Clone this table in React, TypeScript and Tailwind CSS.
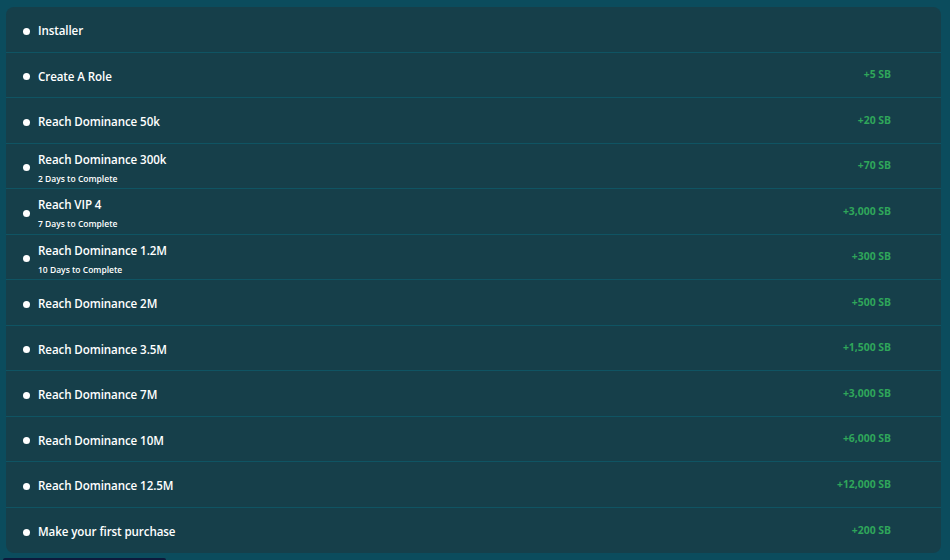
import React from "react";

type Quest = { title: string; sub?: string; reward?: string };

const quests: Quest[] = [
  { title: "Installer" },
  { title: "Create A Role", reward: "+5 SB" },
  { title: "Reach Dominance 50k", reward: "+20 SB" },
  { title: "Reach Dominance 300k", sub: "2 Days to Complete", reward: "+70 SB" },
  { title: "Reach VIP 4", sub: "7 Days to Complete", reward: "+3,000 SB" },
  { title: "Reach Dominance 1.2M", sub: "10 Days to Complete", reward: "+300 SB" },
  { title: "Reach Dominance 2M", reward: "+500 SB" },
  { title: "Reach Dominance 3.5M", reward: "+1,500 SB" },
  { title: "Reach Dominance 7M", reward: "+3,000 SB" },
  { title: "Reach Dominance 10M", reward: "+6,000 SB" },
  { title: "Reach Dominance 12.5M", reward: "+12,000 SB" },
  { title: "Make your first purchase", reward: "+200 SB" },
];

function QuestRow({ q, last }: { q: Quest; last: boolean }) {
  return (
    <div
      className={
        "flex h-[45.5px] items-center pl-[17px] pr-[50px] pt-[4px] " +
        (last ? "" : "border-b border-[#0f5463]")
      }
    >
      <span className="h-[7px] w-[7px] shrink-0 rounded-full bg-white" />
      <div className="ml-[8px] flex flex-1 flex-col">
        <span className="text-[11.6px] font-semibold leading-[16px] tracking-[-0.1px] text-white">
          {q.title}
        </span>
        {q.sub && (
          <span className="mt-[5px] text-[8.5px] font-semibold leading-[11px] text-white">{q.sub}</span>
        )}
      </div>
      {q.reward && (
        <span className="mt-[-3px] text-[10.4px] font-bold text-[#2fa65a]">{q.reward}</span>
      )}
    </div>
  );
}

export default function App() {
  return (
    <div
      className="h-[560px] w-[950px] overflow-hidden bg-[#0b4c5d] pt-[7px]"
      style={{ fontFamily: "'Open Sans', 'Noto Sans', sans-serif" }}
    >
      <div className="ml-[6px] w-[935px] overflow-hidden rounded-[8px] bg-[#163f4a]">
        {quests.map((q, i) => (
          <QuestRow key={q.title} q={q} last={i === quests.length - 1} />
        ))}
      </div>
      <div className="ml-[3px] mt-[5px] h-[4px] w-[163px] rounded-t-[2px] bg-[#0c1a3c]" />
    </div>
  );
}
